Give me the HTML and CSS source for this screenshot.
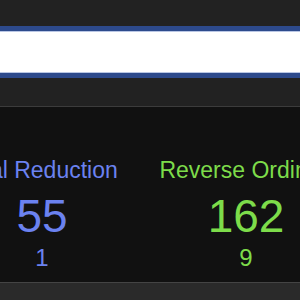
FILE: index.html
```html
<!DOCTYPE html>
<html>
<head>
<meta charset="utf-8">
<link rel="stylesheet" href="styles.css">
</head>
<body>
<div class="page">
  <header class="top">
    <div class="search"><input class="search-input" type="text" value=""></div>
  </header>
  <section class="stats">
    <div class="stat stat-blue">
      <div class="stat-label">Total Reduction</div>
      <div class="stat-value">55</div>
      <div class="stat-sub">1</div>
    </div>
    <div class="stat stat-green">
      <div class="stat-label">Reverse Ordinal</div>
      <div class="stat-value">162</div>
      <div class="stat-sub">9</div>
    </div>
  </section>
  <footer class="bottom"></footer>
</div>
</body>
</html>
```
FILE: styles.css
```css
html, body {
  margin: 0;
  padding: 0;
  background: #222222;
  overflow: hidden;
  font-family: "Liberation Sans", Arial, sans-serif;
}
.page {
  width: 300px;
  height: 300px;
  overflow: hidden;
  display: flex;
  flex-direction: column;
}
.top {
  height: 107px;
  padding-top: 26px;
  box-sizing: border-box;
  background: #222222;
  border-bottom: 1px solid #3c3c3c;
}
.search {
  margin: 0 -10px;
}
.search-input {
  display: block;
  width: 100%;
  height: 52px;
  box-sizing: border-box;
  border: 5px solid #2d4a8c;
  background: #ffffff;
  box-shadow: inset 0 0 0 1px #b9c6e4;
  outline: none;
  padding: 0 12px;
}
.stats {
  height: 176px;
  background: #111111;
  display: grid;
  grid-template-columns: 204px 204px;
  margin-left: -60px;
  padding-top: 49px;
  box-sizing: border-box;
  border-bottom: 1px solid #444444;
}
.stat {
  text-align: center;
  display: flex;
  flex-direction: column;
  align-items: center;
}
.stat-label {
  font-size: 23px;
  line-height: 28px;
  white-space: nowrap;
  padding-right: 7px;
}
.stat-value {
  font-size: 46px;
  line-height: 46px;
  margin-top: 9px;
}
.stat-sub {
  font-size: 24px;
  line-height: 24px;
  margin-top: 7px;
}
.stat-blue { color: #6b82f0; }
.stat-green { color: #7ddc4a; }
.bottom {
  flex: 1;
  background: #2a2a2a;
}
```
